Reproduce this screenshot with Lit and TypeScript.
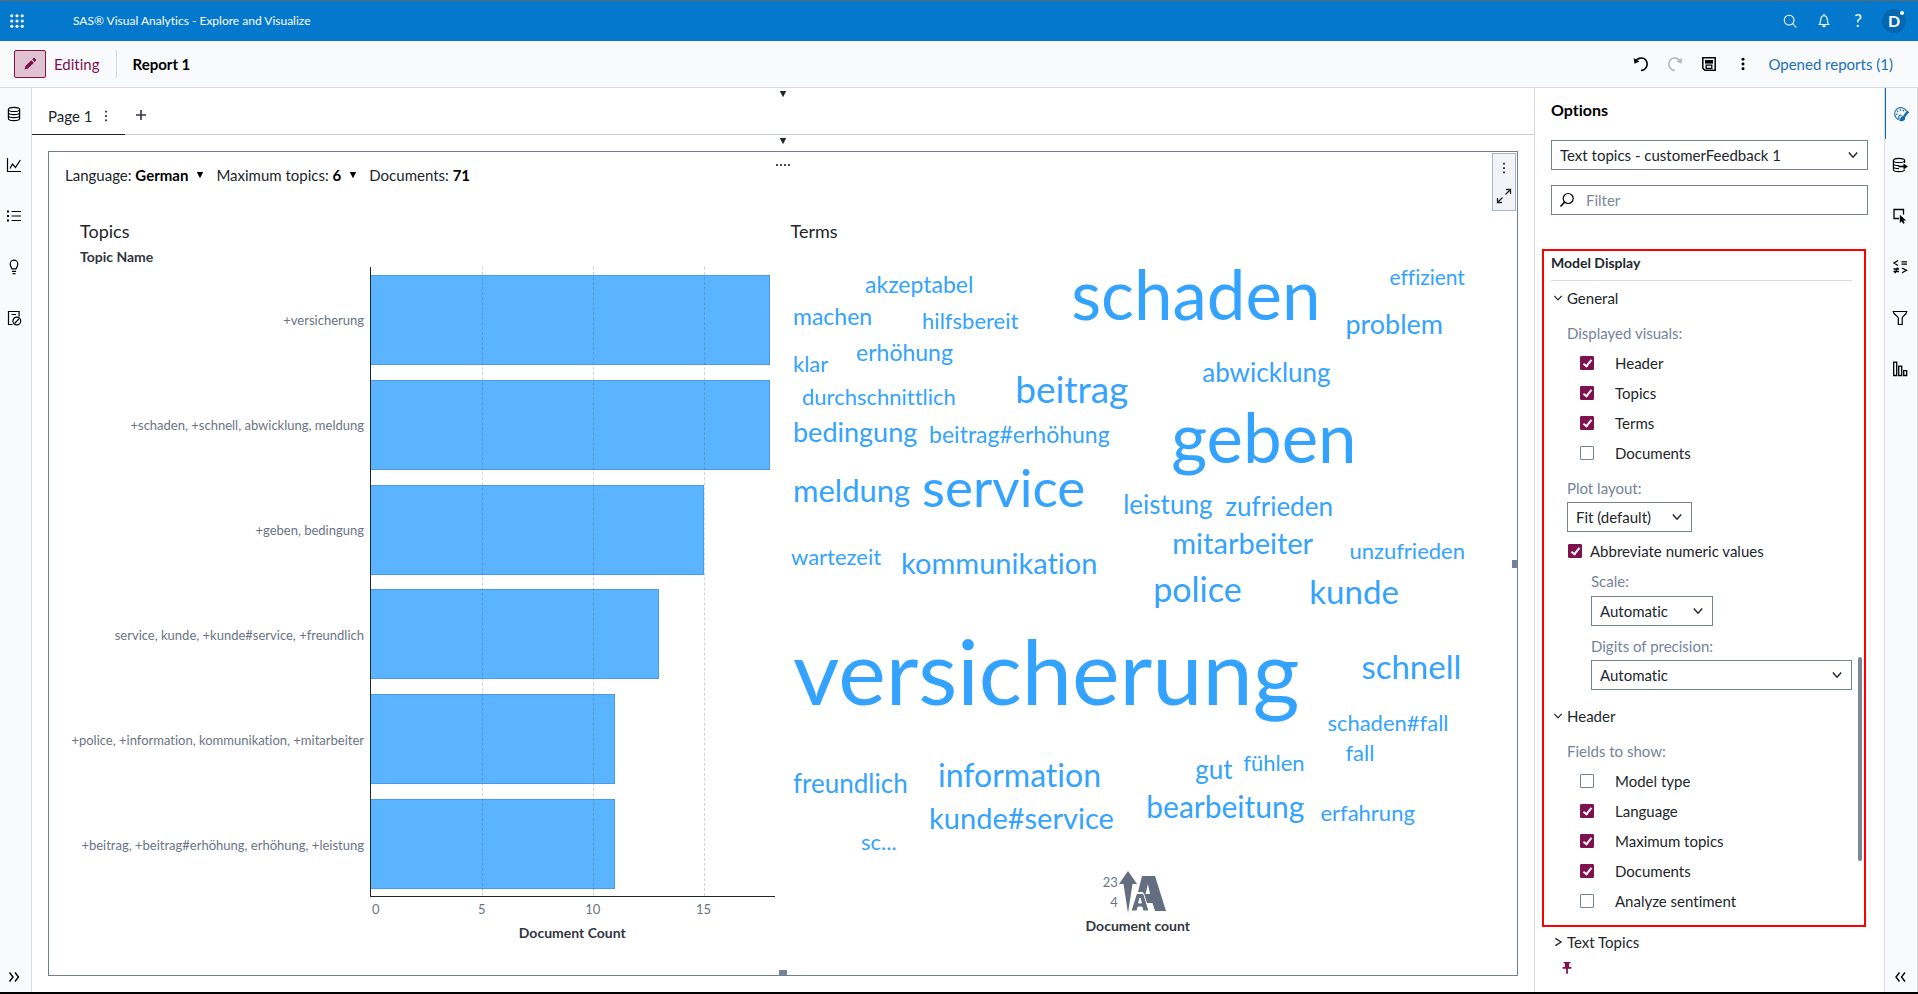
import { LitElement, html, svg, css } from "lit";
import type { SVGTemplateResult } from "lit";
import { customElement, property } from "lit/decorators.js";

const glyphs: Record<string, SVGTemplateResult> = {
  apps: svg`<g fill="currentColor" stroke="none">${[2, 8, 14].flatMap((y) => [2, 8, 14].map((x) => svg`<circle cx=${x} cy=${y} r="1.8"/>`))}</g>`,
  search: svg`<circle cx="7" cy="7" r="5.6"/><path d="M11 11 15.200 15.200"/>`,
  bell: svg`<path d="M2.5 11.5h11M3.5 11.5C5 9.5 4 6 5.5 4 6.8 2.2 9.2 2.2 10.5 4 12 6 11 9.5 12.5 11.5M8 1v1.5"/><path d="M6.5 13.2h3" stroke-width="1.8"/>`,
  pencil: svg`<path d="M2.5 13.5 3.5 10 9.3 4.2 11.9 6.8 6 12.6z" fill="currentColor" stroke="none"/><path d="M10.2 3.3 11.5 2Q12.1 1.6 12.7 2.1L14 3.4Q14.4 4 14 4.6L12.7 5.9z" fill="currentColor" stroke="none"/>`,
  undo: svg`<path d="M2.5 5.5C5 1 11 .8 13.2 4.6 15.8 9 12.8 14.3 8 14.5" stroke-width="1.5"/><path d="M.7 2 1.5 7.8 6.4 5.6z" fill="currentColor" stroke="none"/>`,
  redo: svg`<path d="M13.5 5.5C11 1 5 .8 2.8 4.6.2 9 3.2 14.3 8 14.5" stroke-width="1.5"/><path d="M15.3 2 14.5 7.8 9.6 5.6z" fill="currentColor" stroke="none"/>`,
  save: svg`<path d="M1.8 1.8h12.4v12.4H3.8l-2-2z" stroke-width="1.5"/><path d="M4 4h8v3.6H4z" fill="currentColor" stroke="none"/><path d="M5.2 9.2h5.6v3.2H5.2z" stroke-width="1.3"/>`,
  dots: svg`<g fill="currentColor" stroke="none"><path d="M7 2h2v2H7zM7 7h2v2H7zM7 12h2v2H7z"/></g>`,
  more: svg`<g fill="currentColor" stroke="none"><circle cx="8" cy="2.500" r="1.700"/><circle cx="8" cy="8" r="1.700"/><circle cx="8" cy="13.500" r="1.700"/></g>`,
  plus: svg`<path d="M8 3v10M3 8h10" stroke-width="1.6"/>`,
  data: svg`<ellipse cx="8" cy="3.4" rx="5.6" ry="2.1"/><path d="M2.4 3.4v9.2c0 1.2 2.5 2.1 5.6 2.1s5.6-.9 5.6-2.1V3.4M2.4 6.5c0 1.2 2.5 2.1 5.6 2.1s5.6-.9 5.6-2.1M2.4 9.5c0 1.2 2.5 2.1 5.6 2.1s5.6-.9 5.6-2.1"/>`,
  line: svg`<path d="M1.5 1v13.5H15M4 11.5 6.5 7l3 3.5L14.3 3"/>`,
  list: svg`<path d="M5.5 3.5H15M5.5 8H15M5.5 12.5H15" stroke-width="1.2"/><path d="M1 2.5h2v2H1zM1 7h2v2H1zM1 11.5h2v2H1z" fill="currentColor" stroke="none"/>`,
  bulb: svg`<path d="M6 9.8C5.5 8.5 4.2 7.5 4.2 5a3.8 3.8 0 0 1 7.6 0c0 2.5-1.3 3.5-1.8 4.8zM6 12.3h4M6.5 14.7h3"/>`,
  report: svg`<path d="M6.5 14.5h-4v-13h10.600v5M5.500 4.500h4.500"/><circle cx="10.800" cy="11" r="3.900"/><path d="M8.500 13.500 13 8.800"/>`,
  palette: svg`<path d="M8.500 9.500C7 8.300 5 10 6 12.200c.4 1-.6 1.300-1.500.8A6.200 6.200 0 1 1 13.500 5.200"/><path d="M15.200 5.300 11 10.500" stroke-width="2.400"/><path d="M10.500 10.500C7.500 10.500 8.600 13 7 14.200c2 1 4.700.2 4.700-2.600z" fill="currentColor"/><path d="M4 5.500h1.200M6.800 4H8M9.800 4.500H11M3.200 8.300h1.200" stroke-width="1.400"/>`,
  assign: svg`<ellipse cx="7" cy="3.400" rx="5.600" ry="2.100"/><path d="M1.400 3.400v9.200c0 1.200 2.500 2.100 5.600 2.100s5.600-.9 5.600-2.100M1.400 6.500c0 1.200 2.500 2.100 5.600 2.100M1.400 9.500c0 1.200 2.500 2.100 5.600 2.100M12.600 3.400V6"/><path d="M6.500 9.500H12" stroke-width="1.700"/><path d="M11.500 6.500 16 9.500 11.500 12.500z" fill="currentColor" stroke="none"/>`,
  select: svg`<path d="M7 10.500H2v-9h9.500v5" stroke-width="1.300"/><path d="M7.800 6.800V15l2-1.800 1.300 2.600 1.600-.8-1.300-2.500h2.700z" fill="currentColor" stroke="none"/>`,
  rules: svg`<path d="M6 1.500 2 4l4 2.500M9.500 2.800H15M9.500 5.200H15M1.500 10h5.500M1.500 12.500H7M5.500 8.500 3 14.200M10 9l4.500 2.300L10 13.700" stroke-width="1.300"/>`,
  filter: svg`<path d="M1.200 1.500h13.600c0 3-4.600 4.500-4.600 6.500v6.500H6.300V8C6.300 6 1.200 4.500 1.200 1.500z"/>`,
  rank: svg`<path d="M1.700 1.200h3v13.300h-3zM6.700 5.200h3v9.300h-3zM11.700 9.700h3v4.800h-3z" stroke-width="1.300"/>`,
  right: svg`<path d="M3.500 3.500 7 8 3.500 12.500M9 3.500 12.500 8 9 12.500" stroke-width="1.400"/>`,
  left: svg`<path d="M7.500 3.500 4 8 7.500 12.500M13 3.500 9.500 8 13 12.500" stroke-width="1.400"/>`,
  chevron: svg`<path d="M3.800 5.500 8 10.200 12.200 5.500" stroke-width="1.400"/>`,
  chevronRight: svg`<path d="M5 3.800 11.500 8 5 12.200" stroke-width="1.500"/>`,
  lens: svg`<circle cx="9.200" cy="6.500" r="5"/><path d="M5.500 10.200 1.500 14.500" stroke-width="1.600"/>`,
  expand: svg`<path d="M9.500 6.500 14 2M10 1.500h4.500V6M6.500 9.500 2 14M1.500 10v4.500H6" stroke-width="1.300"/>`,
  pin: svg`<path d="M4 1h8v1.600h-1.500v4.200H13v2H9v5.700H7V8.800H3v-2h2.500V2.600H4z" fill="currentColor" stroke="none"/>`,
  down: svg`<path d="M4.800 5h6.400L8 11.200z" fill="currentColor" stroke="none"/>`,
};

@customElement("ui-icon")
class UiIcon extends LitElement {
  @property() name = "";
  @property({ type: Number }) size = 16;
  static styles = css`
    :host { display: inline-flex; flex: none; }
    .glyph { display: block; fill: none; stroke: currentColor; stroke-width: 1.2; }
  `;
  render() {
    return html`<svg class="glyph" width=${this.size} height=${this.size} viewBox="0 0 16 16" aria-hidden="true">${glyphs[this.name]}</svg>`;
  }
}

const topics = [
  { name: "+versicherung", count: 18 },
  { name: "+schaden, +schnell, abwicklung, meldung", count: 18 },
  { name: "+geben, bedingung", count: 15 },
  { name: "service, kunde, +kunde#service, +freundlich", count: 13 },
  { name: "+police, +information, kommunikation, +mitarbeiter", count: 11 },
  { name: "+beitrag, +beitrag#erhöhung, erhöhung, +leistung", count: 11 },
];
const axisMax = 18.2;

/* Term, left, baseline and size, on a 694 by 626 field. */
const terms: [string, number, number, number][] = [
  ["akzeptabel", 74, 49, 23], ["effizient", 598, 41, 21], ["machen", 2, 81, 23],
  ["hilfsbereit", 131, 85, 22], ["schaden", 280, 76, 69], ["problem", 554, 90, 27],
  ["erhöhung", 65, 117, 23], ["klar", 2, 128, 22], ["abwicklung", 411, 138, 26],
  ["beitrag", 224, 159, 37], ["durchschnittlich", 11, 161, 22], ["bedingung", 2, 198, 27],
  ["beitrag#erhöhung", 138, 199, 23], ["geben", 380, 219, 69], ["meldung", 2, 258, 31],
  ["service", 131, 263, 53], ["leistung", 332, 270, 26], ["zufrieden", 434, 272, 26],
  ["mitarbeiter", 381, 310, 29], ["unzufrieden", 558, 315, 22], ["wartezeit", 0, 321, 22],
  ["kommunikation", 110, 330, 29], ["police", 362, 358, 34], ["kunde", 518, 360, 33],
  ["versicherung", 2, 461, 90], ["schnell", 570, 435, 33], ["schaden#fall", 536, 487, 22],
  ["fall", 554, 517, 22], ["freundlich", 2, 549, 26], ["information", 147, 543, 32],
  ["gut", 404, 535, 26], ["fühlen", 452, 527, 22], ["kunde#service", 138, 585, 29],
  ["bearbeitung", 355, 574, 30], ["erfahrung", 529, 577, 22], ["sc...", 70, 606, 22],
];

@customElement("topics-chart")
class TopicsChart extends LitElement {
  static styles = css`
    :host { display: flex; flex-direction: column; min-width: 0; min-height: 0; }
    .title { margin: 0; font-size: 18px; font-weight: 400; line-height: 26px; color: #21262b; }
    .name { margin: 3px 0 0; font-size: 14px; font-weight: 700; line-height: 20px; color: #32363f; }
    .chart { flex: 1; display: grid; grid-template-columns: 290px 1fr; min-height: 0; }
    .labels { display: flex; flex-direction: column; padding-right: 6px; font-size: 13px; color: #6a7485; }
    .label { flex: 1; display: flex; align-items: center; justify-content: flex-end; white-space: nowrap; }
    .plot { position: relative; display: flex; flex-direction: column; padding-top: 1px; border-left: 1px solid #21262b; border-bottom: 1px solid #21262b; }
    .row { flex: 1; display: flex; align-items: center; }
    .bar { height: 86%; box-sizing: border-box; background: #5ab4ff; border: 1px solid #4a9be6; border-left: 0; }
    .line { position: absolute; top: 0; bottom: 0; border-left: 1px dashed rgb(50 54 63 / 22%); }
    .ticks { position: relative; height: 20px; margin: 2px 0 0 291px; font-size: 13px; line-height: 20px; color: #6a7485; }
    .tick { position: absolute; transform: translateX(-50%); }
    .tick.first { transform: none; padding-left: 1px; }
    .axis { margin: 4px 0 0 290px; text-align: center; font-size: 14px; font-weight: 700; line-height: 20px; color: #32363f; }
  `;
  render() {
    const at = (v: number) => `${(v / axisMax) * 100}%`;
    return html`
      <h2 class="title">Topics</h2>
      <p class="name">Topic Name</p>
      <div class="chart">
        <div class="labels">${topics.map((t) => html`<div class="label">${t.name}</div>`)}</div>
        <div class="plot">
          ${topics.map((t) => html`<div class="row"><div class="bar" style="width:${at(t.count)}"></div></div>`)}
          ${[5, 10, 15].map((v) => html`<div class="line" style="left:${at(v)}"></div>`)}
        </div>
      </div>
      <div class="ticks">
        ${[0, 5, 10, 15].map((v) => html`<span class="tick ${v ? "" : "first"}" style="left:${at(v)}">${v}</span>`)}
      </div>
      <div class="axis">Document Count</div>
    `;
  }
}

@customElement("terms-cloud")
class TermsCloud extends LitElement {
  static styles = css`
    :host { display: flex; flex-direction: column; min-width: 0; min-height: 0; }
    .title { margin: 0; font-size: 18px; font-weight: 400; line-height: 26px; color: #21262b; }
    .cloud { flex: 1; width: 100%; min-height: 0; display: block; overflow: visible; fill: #33a3ff; }
    .legend { display: flex; justify-content: center; align-items: center; gap: 1px; height: 44px; padding-right: 6px; }
    .range { display: flex; flex-direction: column; text-align: right; font-size: 13px; line-height: 20px; color: #6a7485; }
    .caption { text-align: center; margin: 2px 0 7px; font-size: 14px; font-weight: 700; line-height: 20px; color: #32363f; }
  `;
  render() {
    return html`
      <h2 class="title">Terms</h2>
      <svg class="cloud" role="img" aria-label="Terms">
        ${terms.map(([t, x, y, s]) => svg`<text x="${(x / 694) * 100}%" y="${(y / 626) * 100}%" font-size=${s}>${t}</text>`)}
      </svg>
      <div class="legend">
        <div class="range"><span>23</span><span>4</span></div>
        <svg width="48" height="44" viewBox="0 0 48 44" fill="#636e80" aria-hidden="true">
          <path d="M9 1 18 14h-4.500L9 43 4.500 14H0z" />
          <path fill-rule="evenodd" d="M23 6h13l11 35H36l-2.500-8H26l-2-11h-5zM29 14l-2.500 10H31z" />
          <path fill-rule="evenodd" stroke="#fff" stroke-width="1" d="M17.500 23.500h7L30 41h-6l-1-4h-4l-1 4h-6zM21 28l-1.500 5h3z" />
        </svg>
      </div>
      <div class="caption">Document count</div>
    `;
  }
}

@customElement("options-panel")
class OptionsPanel extends LitElement {
  static styles = css`
    :host { display: block; box-sizing: border-box; width: 351px; flex: none; padding: 0 16px; border-left: 1px solid #d8dae0; border-right: 1px solid #d8dae0; background: #fff; color: #21262b; font-size: 15px; line-height: 20px; }
    .heading { margin: 12px 0 20px; font-size: 16px; line-height: 20px; font-weight: 700; color: #000; }
    .pick { display: grid; align-items: center; }
    .pick > * { grid-area: 1 / 1; }
    .pick ui-icon { justify-self: end; margin-right: 7px; pointer-events: none; }
    .input, .choice { box-sizing: border-box; width: 100%; height: 30px; padding: 0 8px; border: 1px solid #768396; border-radius: 0; background: #fff; color: inherit; font: inherit; appearance: none; }
    .search { margin-top: 15px; }
    .search .input { padding-left: 34px; }
    .search .input::placeholder { color: #7d879a; opacity: 1; }
    .search ui-icon { justify-self: start; margin-left: 8px; color: #000; }
    .model { position: relative; margin: 34px 2px 0 -9px; padding: 2px 12px 9px 7px; border: 2px solid #f00; }
    .sub { margin: 0; padding-bottom: 7px; border-bottom: 1px solid #d8dae0; font-size: 14px; line-height: 20px; }
    .fold { display: flex; align-items: center; gap: 2px; height: 20px; margin: 7px 0 0; padding: 0; border: 0; background: none; color: inherit; font: inherit; }
    .group { margin: 0; padding: 0 0 0 16px; border: 0; }
    .caption { display: block; padding: 10px 0 0; color: #76839a; }
    .lead { padding-top: 15px; }
    .check { display: flex; align-items: center; gap: 21px; height: 30px; margin-left: 13px; }
    .first { margin-top: 5px; }
    .box { appearance: none; flex: none; display: grid; place-items: center; box-sizing: border-box; width: 14px; height: 14px; margin: 0; border: 1px solid #768396; border-radius: 1px; background: #fff; }
    .box:checked { background: #7f114f; border-color: #7f114f; }
    .box:checked::before { content: ""; box-sizing: border-box; width: 5px; height: 9px; margin-top: -2px; border: solid #fff; border-width: 0 2px 2px 0; transform: rotate(38deg); }
    .narrow { width: 125px; margin-top: 4px; }
    .wide { margin-top: 4px; }
    .short { width: 122px; margin-top: 5px; }
    .near { gap: 8px; margin: 4px 0 0 1px; }
    .deep { padding-left: 24px; }
    .scale { padding-top: 5px; }
    .second { margin-top: 16px; }
    .thumb { position: absolute; top: 406px; right: 2px; width: 4px; height: 204px; border-radius: 2px; background: #7a8699; }
    .after { margin-top: 5px; }
    .pinned { display: block; margin: 9px 0 0 9px; padding: 0; border: 0; background: none; color: #7f114f; line-height: 0; }
  `;
  private check(label: string, checked: boolean, first = false) {
    return html`<label class="check ${first ? "first" : ""}"><input class="box" type="checkbox" .checked=${checked} />${label}</label>`;
  }
  render() {
    return html`
      <h2 class="heading">Options</h2>
      <div class="pick">
        <select class="choice" aria-label="Object"><option>Text topics - customerFeedback 1</option></select>
        <ui-icon name="chevron"></ui-icon>
      </div>
      <div class="pick search">
        <input class="input" type="text" placeholder="Filter" aria-label="Filter" />
        <ui-icon name="lens"></ui-icon>
      </div>
      <section class="model">
        <h3 class="sub">Model Display</h3>
        <button class="fold"><ui-icon name="chevron" size="14"></ui-icon>General</button>
        <fieldset class="group">
          <legend class="caption lead">Displayed visuals:</legend>
          ${this.check("Header", true, true)} ${this.check("Topics", true)}
          ${this.check("Terms", true)} ${this.check("Documents", false)}
        </fieldset>
        <div class="group">
          <label class="caption" for="layout">Plot layout:</label>
          <div class="pick narrow">
            <select class="choice" id="layout"><option>Fit (default)</option></select>
            <ui-icon name="chevron"></ui-icon>
          </div>
          <label class="check near"><input class="box" type="checkbox" .checked=${true} />Abbreviate numeric values</label>
          <div class="deep">
            <label class="caption scale" for="scale">Scale:</label>
            <div class="pick short">
              <select class="choice" id="scale"><option>Automatic</option></select>
              <ui-icon name="chevron"></ui-icon>
            </div>
            <label class="caption" for="digits">Digits of precision:</label>
            <div class="pick wide">
              <select class="choice" id="digits"><option>Automatic</option></select>
              <ui-icon name="chevron"></ui-icon>
            </div>
          </div>
        </div>
        <button class="fold second"><ui-icon name="chevron" size="14"></ui-icon>Header</button>
        <fieldset class="group">
          <legend class="caption lead">Fields to show:</legend>
          ${this.check("Model type", false, true)} ${this.check("Language", true)}
          ${this.check("Maximum topics", true)} ${this.check("Documents", true)}
          ${this.check("Analyze sentiment", false)}
        </fieldset>
        <div class="thumb"></div>
      </section>
      <button class="fold after"><ui-icon name="chevronRight" size="14"></ui-icon>Text Topics</button>
      <button class="pinned" aria-label="Pin"><ui-icon name="pin" size="14"></ui-icon></button>
    `;
  }
}

@customElement("app-root")
class AppRoot extends LitElement {
  static styles = css`
    :host { display: flex; flex-direction: column; box-sizing: border-box; height: 100vh; min-height: 960px; border-top: 1px solid #666; border-bottom: 2px solid #000; background: #fff; color: #21262b; font-family: Lato, "Open Sans", sans-serif; font-size: 15px; line-height: 20px; font-variant-ligatures: none; }
    button { padding: 0; border: 0; background: none; color: inherit; font: inherit; display: flex; align-items: center; justify-content: center; }
    .banner { flex: none; display: flex; align-items: center; height: 40px; padding: 0 12px 0 10px; background: #0378cd; color: #fff; }
    .product { margin: 0 auto 0 49px; font-size: 12px; font-weight: 400; }
    .tool { width: 34px; height: 34px; }
    .help { font-size: 17px; }
    .avatar { position: relative; width: 24px; height: 24px; margin-left: 7px; border-radius: 50%; background: #0466ae; font-size: 16px; font-weight: 700; }
    .badge { position: absolute; top: 2px; right: 2px; width: 4px; height: 4px; border-radius: 50%; background: #fff; }
    .toolbar { flex: none; display: flex; align-items: center; height: 46px; padding: 0 25px 0 14px; border-bottom: 1px solid #d8dae0; background: #f9fafc; }
    .edit { box-sizing: border-box; width: 32px; height: 28px; border: 1px solid #7f114f; border-radius: 2px; background: #dfc3d3; color: #7f114f; }
    .mode { margin: 0 16px 0 8px; color: #7f114f; }
    .report { margin: 0 auto 0 0; padding-left: 16px; border-left: 1px solid #d8dae0; font-size: 15px; line-height: 28px; font-weight: 700; color: #000; }
    .toolbar .tool { color: #000; }
    .toolbar .off { color: #b4b7bd; }
    .opened { margin-left: 8px; color: #1a70b8; text-decoration: none; }
    .work { flex: 1; display: flex; min-height: 0; }
    .rail { flex: none; display: flex; flex-direction: column; box-sizing: border-box; width: 32px; padding-right: 3px; border-right: 1px solid #d8dae0; background: #f9fafc; color: #000; }
    .rail.end { width: 33px; padding: 0 2px 0 0; }
    .side { height: 51px; }
    .side.last { height: 30px; margin-top: auto; }
    .side.on { color: #0f6ab4; border-left: 1px solid #0f6ab4; margin-right: -1px; }
    .main { flex: 1; display: flex; flex-direction: column; min-width: 0; }
    .tabs { position: relative; flex: none; display: flex; height: 46px; border-bottom: 1px solid #cad0d8; }
    .tab { display: flex; align-items: center; box-sizing: border-box; width: 93px; height: 47px; padding: 9px 12px 0 16px; border-bottom: 1px solid #21262b; }
    .page { margin-right: auto; }
    .add { width: 32px; padding-top: 7px; color: #32363f; }
    .grip { position: absolute; left: 50%; color: #21262b; line-height: 0; transform: translateX(-50%); }
    .upper { top: -2px; }
    .lower { top: 45px; }
    .card { position: relative; flex: 1; display: flex; flex-direction: column; min-height: 0; margin: 16px; border: 1px solid #6f7f90; }
    .facts { display: flex; align-items: center; height: 46px; padding-left: 16px; color: #21262b; }
    .fact { display: flex; align-items: center; color: inherit; margin-right: 8px; white-space: pre; }
    .value { font-weight: 700; color: #000; }
    .fact ui-icon { margin: 0 0 0 4px; color: #000; }
    .visuals { flex: 1; display: grid; grid-template-columns: 1fr 1fr; gap: 16px; min-height: 0; padding: 20px 32px 32px 31px; }
    .menu { position: absolute; top: 1px; right: 1px; box-sizing: border-box; width: 24px; height: 58px; border: 1px solid #a9b5c3; background: #f1f3f6; display: flex; flex-direction: column; justify-content: space-around; align-items: center; }
    .drag { position: absolute; top: 12px; left: 50%; display: flex; gap: 2px; transform: translateX(-50%); }
    .drag i { width: 2px; height: 2px; background: #43484f; }
    .knob { position: absolute; background: #76839a; }
    .knob.right { right: 0; top: 50%; width: 5px; height: 8px; transform: translateY(-50%); }
    .knob.bottom { bottom: 0; left: 50%; width: 8px; height: 5px; transform: translateX(-50%); }
  `;
  private rail(names: string[], active = "") {
    return names.map((n) => html`<button class="side ${n === active ? "on" : ""}" aria-label=${n}><ui-icon name=${n}></ui-icon></button>`);
  }
  render() {
    return html`
      <header class="banner">
        <button aria-label="Applications"><ui-icon name="apps" size="14"></ui-icon></button>
        <h1 class="product">SAS® Visual Analytics - Explore and Visualize</h1>
        <button class="tool" aria-label="Search"><ui-icon name="search" size="14"></ui-icon></button>
        <button class="tool" aria-label="Notifications"><ui-icon name="bell"></ui-icon></button>
        <button class="tool help">?</button>
        <button class="avatar">D<i class="badge"></i></button>
      </header>
      <div class="toolbar">
        <button class="edit" aria-label="Edit"><ui-icon name="pencil"></ui-icon></button>
        <span class="mode">Editing</span>
        <h2 class="report">Report 1</h2>
        <button class="tool" aria-label="Undo"><ui-icon name="undo"></ui-icon></button>
        <button class="tool off" aria-label="Redo" disabled><ui-icon name="redo"></ui-icon></button>
        <button class="tool" aria-label="Save"><ui-icon name="save"></ui-icon></button>
        <button class="tool" aria-label="More"><ui-icon name="more" size="14"></ui-icon></button>
        <a class="opened" href="#">Opened reports (1)</a>
      </div>
      <div class="work">
        <nav class="rail">
          ${this.rail(["data", "line", "list", "bulb", "report"])}
          <button class="side last" aria-label="Expand"><ui-icon name="right"></ui-icon></button>
        </nav>
        <main class="main">
          <div class="tabs">
            <div class="tab">
              <span class="page">Page 1</span>
              <button aria-label="Page menu"><ui-icon name="dots" size="14"></ui-icon></button>
            </div>
            <button class="add" aria-label="Add page"><ui-icon name="plus"></ui-icon></button>
            <button class="grip upper" aria-label="Collapse"><ui-icon name="down"></ui-icon></button>
            <button class="grip lower" aria-label="Collapse"><ui-icon name="down"></ui-icon></button>
          </div>
          <section class="card">
            <div class="facts">
              <button class="fact">Language: <span class="value">German</span><ui-icon name="down"></ui-icon></button>
              <button class="fact">Maximum topics: <span class="value">6</span><ui-icon name="down"></ui-icon></button>
              <span class="fact">Documents: <span class="value">71</span></span>
            </div>
            <div class="visuals">
              <topics-chart></topics-chart>
              <terms-cloud></terms-cloud>
            </div>
            <div class="menu">
              <button aria-label="Object menu"><ui-icon name="dots" size="14"></ui-icon></button>
              <button aria-label="Maximize"><ui-icon name="expand"></ui-icon></button>
            </div>
            <div class="drag"><i></i><i></i><i></i><i></i></div>
            <div class="knob right"></div>
            <div class="knob bottom"></div>
          </section>
        </main>
        <options-panel></options-panel>
        <nav class="rail end">
          ${this.rail(["palette", "assign", "select", "rules", "filter", "rank"], "palette")}
          <button class="side last" aria-label="Collapse"><ui-icon name="left"></ui-icon></button>
        </nav>
      </div>
    `;
  }
}
